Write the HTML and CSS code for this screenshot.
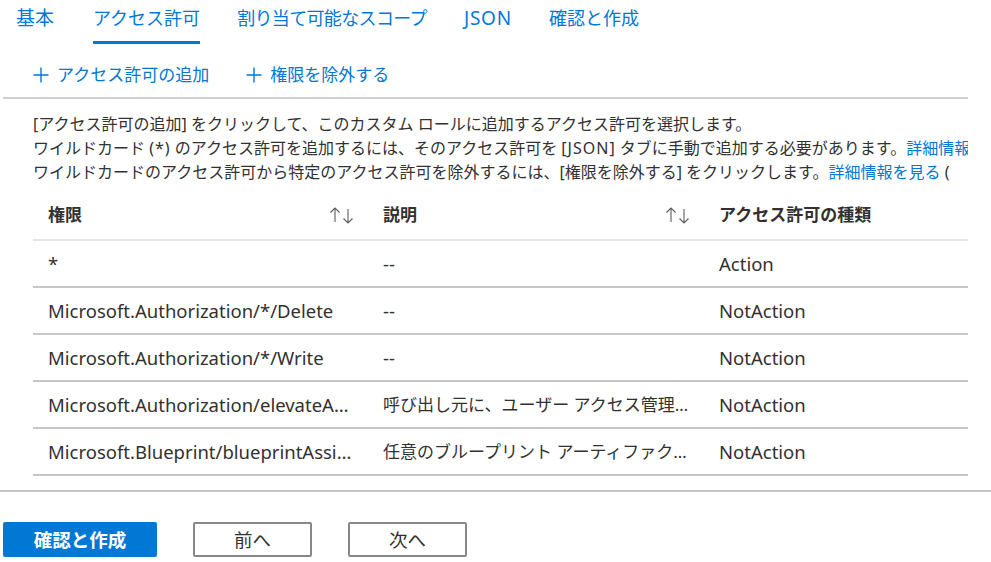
FILE: index.html
```html
<!DOCTYPE html>
<html lang="ja">
<head>
<meta charset="utf-8">
<title>アクセス許可</title>
<link rel="stylesheet" href="styles.css">
</head>
<body>
<div class="main">
  <nav class="tabs">
    <div class="tab">基本</div>
    <div class="tab active">アクセス許可</div>
    <div class="tab scope">割り当て可能なスコープ</div>
    <div class="tab json">JSON</div>
    <div class="tab">確認と作成</div>
  </nav>
  <div class="content">
    <div class="toolbar">
      <div class="tool">
        <svg class="plus" viewBox="0 0 16 16" width="16" height="16"><path d="M8 0.5V15.5M0.5 8H15.5" stroke="#0078d4" stroke-width="1.4" fill="none"/></svg>
        <span>アクセス許可の追加</span>
      </div>
      <div class="tool">
        <svg class="plus" viewBox="0 0 16 16" width="16" height="16"><path d="M8 0.5V15.5M0.5 8H15.5" stroke="#0078d4" stroke-width="1.4" fill="none"/></svg>
        <span>権限を除外する</span>
      </div>
    </div>
    <div class="desc">
      <div class="line">[アクセス許可の追加] をクリックして、このカスタム ロールに追加するアクセス許可を選択します。</div>
      <div class="line">ワイルドカード <span class="wide">(*)</span> のアクセス許可を追加するには、そのアクセス許可を <span class="wide">[JSON]</span> タブに手動で追加する必要があります。<a class="link">詳細情報を見る</a></div>
      <div class="line">ワイルドカードのアクセス許可から特定のアクセス許可を除外するには、[権限を除外する] をクリックします。<a class="link">詳細情報を見る</a> (</div>
    </div>
    <div class="table">
      <div class="row head">
        <div class="cell c1"><span>権限</span><svg class="sort" viewBox="0 0 26 18" width="26" height="18"><path d="M6 2V16M1.5 6.5L6 2L10.5 6.5" stroke="#605e5c" stroke-width="1.1" fill="none"/><path d="M19 3V17M14.5 12.5L19 17L23.5 12.5" stroke="#605e5c" stroke-width="1.1" fill="none"/></svg></div>
        <div class="cell c2"><span>説明</span><svg class="sort" viewBox="0 0 26 18" width="26" height="18"><path d="M6 2V16M1.5 6.5L6 2L10.5 6.5" stroke="#605e5c" stroke-width="1.1" fill="none"/><path d="M19 3V17M14.5 12.5L19 17L23.5 12.5" stroke="#605e5c" stroke-width="1.1" fill="none"/></svg></div>
        <div class="cell c3"><span>アクセス許可の種類</span></div>
      </div>
      <div class="row">
        <div class="cell c1"><span class="txt">*</span></div>
        <div class="cell c2"><span class="txt">--</span></div>
        <div class="cell c3"><span class="txt">Action</span></div>
      </div>
      <div class="row">
        <div class="cell c1"><span class="txt">Microsoft.Authorization/*/Delete</span></div>
        <div class="cell c2"><span class="txt">--</span></div>
        <div class="cell c3"><span class="txt">NotAction</span></div>
      </div>
      <div class="row">
        <div class="cell c1"><span class="txt">Microsoft.Authorization/*/Write</span></div>
        <div class="cell c2"><span class="txt">--</span></div>
        <div class="cell c3"><span class="txt">NotAction</span></div>
      </div>
      <div class="row">
        <div class="cell c1"><span class="txt">Microsoft.Authorization/elevateAccess/Action</span></div>
        <div class="cell c2"><span class="txt ja">呼び出し元に、ユーザー アクセス管理者ロールを付与します</span></div>
        <div class="cell c3"><span class="txt">NotAction</span></div>
      </div>
      <div class="row">
        <div class="cell c1"><span class="txt">Microsoft.Blueprint/blueprintAssignments/write</span></div>
        <div class="cell c2"><span class="txt ja">任意のブループリント アーティファクトを作成または更新します</span></div>
        <div class="cell c3"><span class="txt">NotAction</span></div>
      </div>
      <div class="row">
        <div class="cell c1"><span class="txt">Microsoft.Blueprint/blueprintAssignments/delete</span></div>
        <div class="cell c2"><span class="txt ja">ブループリント アーティファクトを削除します</span></div>
        <div class="cell c3"><span class="txt">NotAction</span></div>
      </div>
    </div>
  </div>
</div>
<footer class="footer">
  <button class="btn primary">確認と作成</button>
  <button class="btn secondary">前へ</button>
  <button class="btn secondary">次へ</button>
</footer>
</body>
</html>
```

FILE: styles.css
```css
html, body {
  margin: 0;
  padding: 0;
  background: #ffffff;
}
body {
  font-family: "Noto Sans", "Noto Sans CJK JP", sans-serif;
  color: #323130;
  width: 991px;
  height: 562px;
  overflow: hidden;
}
.main {
  height: 490px;
  overflow: hidden;
  padding-left: 3px;
}
.tabs {
  display: flex;
  gap: 37px;
  padding-left: 13px;
  height: 44px;
}
.tab {
  font-family: "Noto Sans", "Noto Sans CJK JP", sans-serif;
  font-size: 18px;
  line-height: 24px;
  padding-top: 6px;
  height: 38px;
  color: #0078d4;
  white-space: nowrap;
  box-sizing: border-box;
}
.tab:first-child {
  font-size: 19px;
  margin-right: 2px;
}
.tab.scope {
  letter-spacing: -0.65px;
}
.tab.json {
  font-size: 19px;
  letter-spacing: 0.8px;
}
.tab.active {
  border-bottom: 3px solid #0078d4;
  padding-bottom: 11px;
  height: auto;
}
.content {
  width: 965px;
  overflow: hidden;
}
.toolbar {
  display: flex;
  gap: 37px;
  padding: 19px 0 10px 30px;
  border-bottom: 2px solid #d2d0ce;
}
.tool {
  display: flex;
  align-items: center;
  gap: 8px;
  font-size: 17px;
  line-height: 24px;
  color: #0078d4;
  white-space: nowrap;
}
.plus {
  display: block;
}
.desc {
  padding: 13px 0 0 30px;
  font-size: 16px;
  line-height: 24px;
}
.line {
  white-space: nowrap;
  overflow: hidden;
}
.wide {
  letter-spacing: 1px;
}
.link {
  color: #0078d4;
  text-decoration: none;
}
.table {
  margin: 6px 0 0 30px;
  width: 935px;
}
.row {
  display: grid;
  grid-template-columns: 335px 336px 264px;
  height: 45px;
  border-bottom: 2px solid #c8c6c4;
  align-items: center;
}
.row.head {
  height: 49px;
  border-bottom: 2px solid #e6e6e6;
}
.cell {
  padding-left: 15px;
  min-width: 0;
  font-size: 18.5px;
  line-height: 24px;
}
.head .cell {
  display: flex;
  justify-content: space-between;
  align-items: center;
  padding-right: 13px;
  font-weight: 600;
  font-size: 17px;
}
.sort {
  display: block;
}
.txt {
  display: block;
  white-space: nowrap;
  overflow: hidden;
  text-overflow: ellipsis;
  padding-right: 12px;
}
.txt.ja {
  font-size: 17px;
}
.footer {
  border-top: 2px solid #c8c6c4;
  padding: 30px 0 0 3px;
  display: flex;
  gap: 36px;
}
.btn {
  height: 35px;
  border-radius: 2px;
  font-family: "Noto Sans", "Noto Sans CJK JP", sans-serif;
  font-size: 18.5px;
  line-height: 24px;
  padding: 0;
  cursor: pointer;
}
.primary {
  width: 154px;
  background: #0078d4;
  border: none;
  color: #ffffff;
  font-weight: 700;
}
.secondary {
  width: 119px;
  background: #ffffff;
  border: 2px solid #8a8886;
  color: #323130;
}
```
